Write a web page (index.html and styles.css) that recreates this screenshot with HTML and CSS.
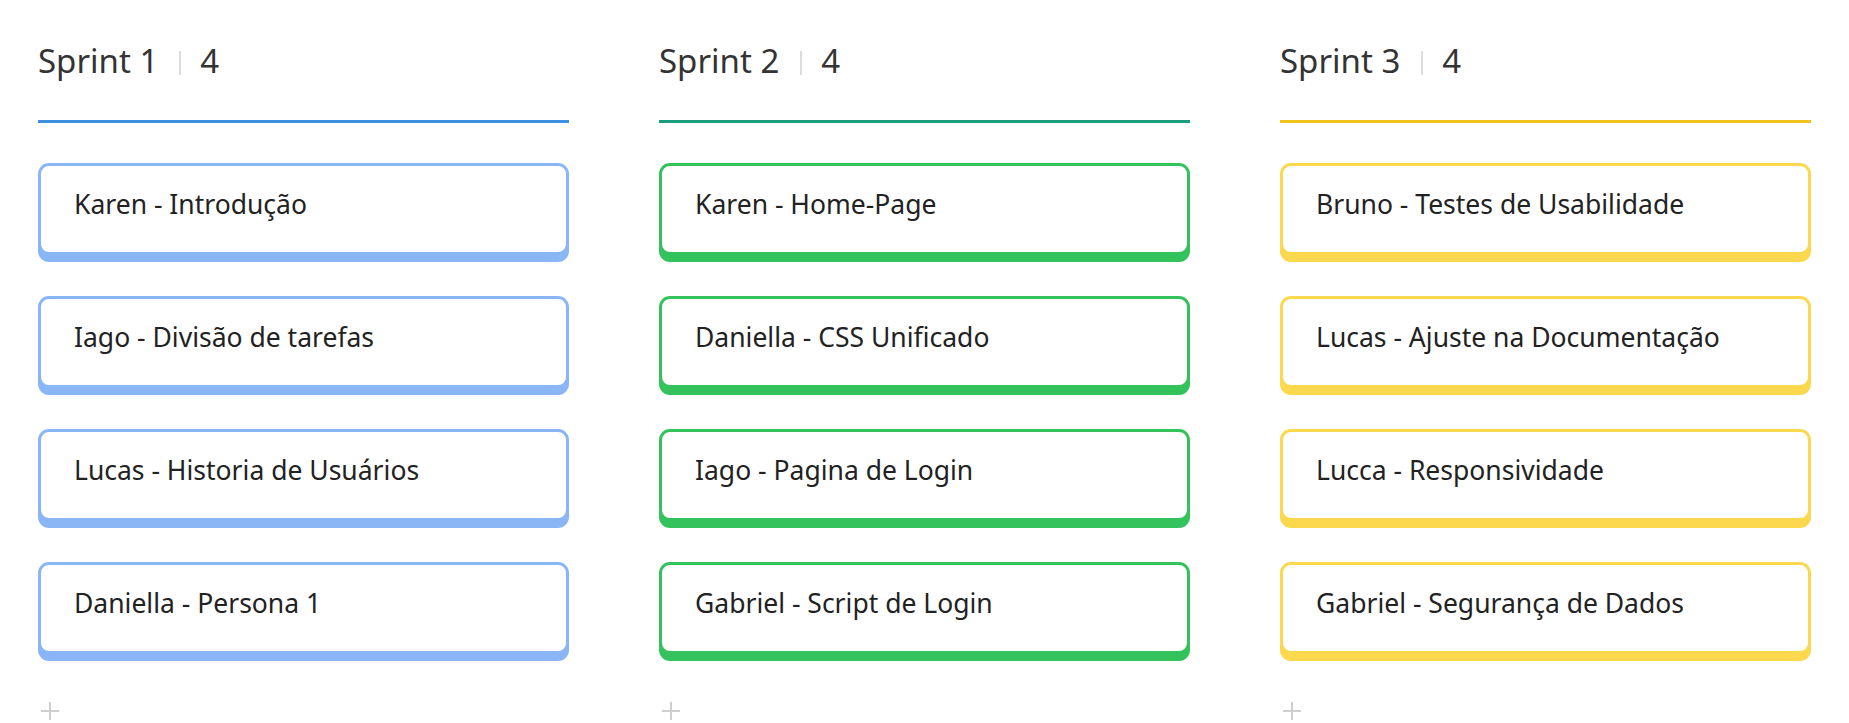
FILE: index.html
```html
<!DOCTYPE html>
<html lang="pt">
<head>
<meta charset="utf-8">
<title>Sprints</title>
<link rel="stylesheet" href="styles.css">
</head>
<body>
<div class="board">
  <section class="column col-blue">
    <header class="col-header"><span class="col-title">Sprint 1</span><span class="sep"></span><span class="count">4</span></header>
    <div class="cards">
      <div class="card">Karen - Introdução</div>
      <div class="card">Iago - Divisão de tarefas</div>
      <div class="card">Lucas - Historia de Usuários</div>
      <div class="card">Daniella - Persona 1</div>
    </div>
    <div class="add"><svg width="20" height="20" viewBox="0 0 20 20"><path d="M10 1v18M1 10h18" stroke="#cfcfcf" stroke-width="2" fill="none"/></svg></div>
  </section>
  <section class="column col-green">
    <header class="col-header"><span class="col-title">Sprint 2</span><span class="sep"></span><span class="count">4</span></header>
    <div class="cards">
      <div class="card">Karen - Home-Page</div>
      <div class="card">Daniella - CSS Unificado</div>
      <div class="card">Iago - Pagina de Login</div>
      <div class="card">Gabriel - Script de Login</div>
    </div>
    <div class="add"><svg width="20" height="20" viewBox="0 0 20 20"><path d="M10 1v18M1 10h18" stroke="#cfcfcf" stroke-width="2" fill="none"/></svg></div>
  </section>
  <section class="column col-yellow">
    <header class="col-header"><span class="col-title">Sprint 3</span><span class="sep"></span><span class="count">4</span></header>
    <div class="cards">
      <div class="card">Bruno - Testes de Usabilidade</div>
      <div class="card">Lucas - Ajuste na Documentação</div>
      <div class="card">Lucca - Responsividade</div>
      <div class="card">Gabriel - Segurança de Dados</div>
    </div>
    <div class="add"><svg width="20" height="20" viewBox="0 0 20 20"><path d="M10 1v18M1 10h18" stroke="#cfcfcf" stroke-width="2" fill="none"/></svg></div>
  </section>
</div>
</body>
</html>
```
FILE: styles.css
```css
html, body {
  margin: 0;
  padding: 0;
  background: #ffffff;
}
body {
  font-family: "Noto Sans", "Open Sans", sans-serif;
  color: #2b2b2b;
  overflow: hidden;
}
.board {
  display: grid;
  grid-template-columns: repeat(3, 531px);
  column-gap: 90px;
  padding: 38px 0 0 38px;
}
.column {
  display: flex;
  flex-direction: column;
}
.col-header {
  display: flex;
  align-items: center;
  height: 45px;
  padding-bottom: 37px;
  border-bottom: 3px solid var(--line);
  font-size: 33px;
  line-height: 45px;
  color: #333;
}
.sep {
  display: inline-block;
  width: 2px;
  height: 24px;
  background: #dcdcdc;
  margin: 4px 19px 0 21px;
}
.cards {
  display: flex;
  flex-direction: column;
  gap: 41px;
  margin-top: 40px;
}
.card {
  box-sizing: content-box;
  border: 3px solid var(--card);
  border-radius: 11px;
  box-shadow: 0 7px 0 var(--card);
  background: #fff;
  padding: 21px 30px 30px 33px;
  height: 35px;
  font-size: 26.5px;
  line-height: 35px;
  color: #222;
}
.add {
  margin-top: 47px;
  margin-left: 2px;
  height: 20px;
  display: flex;
}
.col-blue { --line: #3d8fe0; --card: #8bb6f6; }
.col-green { --line: #1a9c7e; --card: #34c25c; }
.col-yellow { --line: #f4c21d; --card: #fbd84d; }
```
